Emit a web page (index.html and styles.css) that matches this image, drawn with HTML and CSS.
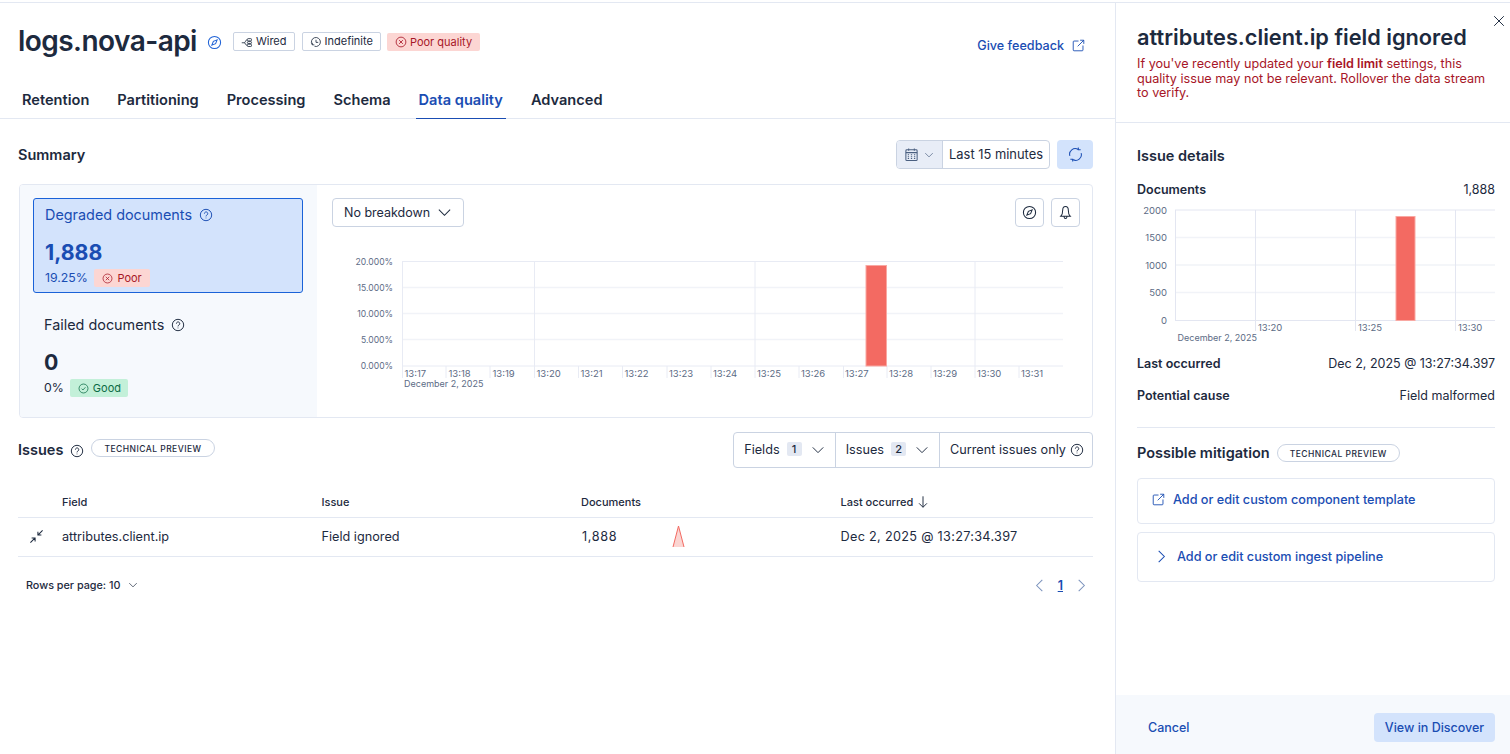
FILE: index.html
```html
<!DOCTYPE html>
<html lang="en">
<head>
<meta charset="utf-8">
<title>logs.nova-api</title>
<link rel="stylesheet" href="styles.css">
</head>
<body>
<svg class="defs" aria-hidden="true">
  <symbol id="i-help" viewBox="0 0 16 16"><circle cx="8" cy="8" r="6.5"/><path d="M6.2 6.4a1.900 1.900 0 1 1 2.900 1.600c-.7.4-1.100.8-1.100 1.600M8 11v.8"/></symbol>
  <symbol id="i-compass" viewBox="0 0 16 16"><circle cx="8" cy="8" r="6.500"/><path d="M10.800 5.200 9.200 9.200 5.200 10.800 6.800 6.800Z"/></symbol>
  <symbol id="i-x" viewBox="0 0 16 16"><circle cx="8" cy="8" r="6.500"/><path d="m5.500 5.500 5 5m0-5-5 5"/></symbol>
  <symbol id="i-check" viewBox="0 0 16 16"><circle cx="8" cy="8" r="6.500"/><path d="m5.200 8.200 2 2 3.600-4"/></symbol>
  <symbol id="i-down" viewBox="0 0 16 16"><path d="m2 5 6 6 6-6"/></symbol>
  <symbol id="i-left" viewBox="0 0 16 16"><path d="M11 2 5 8l6 6"/></symbol>
  <symbol id="i-right" viewBox="0 0 16 16"><path d="M5 2l6 6-6 6"/></symbol>
  <symbol id="i-pop" viewBox="0 0 16 16"><path d="M8 2.500H2.500a1 1 0 0 0-1 1v10a1 1 0 0 0 1 1h10a1 1 0 0 0 1-1V8M7 9l7.500-7.500M10 1.500h4.500V6"/></symbol>
  <symbol id="i-cal" viewBox="0 0 16 16"><rect x="2" y="3" width="12" height="11.500" rx="1"/><path d="M2 6h12M5 1.500V4M11 1.500V4M4 8.300h1.400M7.300 8.300h1.400M10.600 8.300H12M4 10.300h1.400M7.300 10.300h1.400M10.600 10.300H12M4 12.300h1.400M7.300 12.300h1.400M10.600 12.300H12"/></symbol>
  <symbol id="i-sync" viewBox="0 0 16 16"><path d="M2 9.500A6 6 0 0 1 10.800 2.600M14 6.500A6 6 0 0 1 5.200 13.400M11 .5v2.500H13.500M5 15.500V13H2.500"/></symbol>
  <symbol id="i-bell" viewBox="0 0 16 16"><path d="M8 1.500C5.800 1.500 5 3.400 5 5.500c0 3.500-.6 5.200-2 6.500h10c-1.400-1.300-2-3-2-6.500 0-2.100-.8-4-3-4ZM6.500 12.500c0 1 .6 1.800 1.500 1.800s1.500-.8 1.500-1.800"/></symbol>
  <symbol id="i-wired" viewBox="0 0 16 16"><path d="M1 9h3.500M4.500 9c1.500 0 1.500-4 3.500-4M4.500 9c1.500 0 1.500 3.500 3.500 3.500"/><rect x="8.500" y="3.500" width="5.500" height="3" rx="1"/><rect x="8.500" y="7.500" width="5.500" height="2.500" rx="1"/><rect x="8.500" y="11" width="5.500" height="3" rx="1"/></symbol>
  <symbol id="i-clock" viewBox="0 0 16 16"><path d="M3 11.500A6 6 0 1 1 6 13.700M3 9v2.800h2.800M8 5v3.500h3"/></symbol>
  <symbol id="i-min" viewBox="0 0 16 16"><path d="M14.500 1.500 9.500 6.500M9.500 2.800v3.700h3.700M1.500 14.500l5-5M2.800 9.500h3.700v3.700"/></symbol>
  <symbol id="i-close" viewBox="0 0 16 16"><path d="m2.500 2.500 11 11m0-11-11 11"/></symbol>
  <symbol id="i-arrow" viewBox="0 0 16 16"><path d="M8 1.500v12.500M3.500 9.500 8 14l4.500-4.500"/></symbol>
</svg>

<div class="strip"></div>
<div class="shell">
  <main class="main">
    <header class="head">
      <div class="head-row">
        <h1 class="title">logs.nova-api</h1>
        <svg class="ic ic-15 title-ic"><use href="#i-compass"/></svg>
        <span class="badge badge-out"><svg class="ic ic-12"><use href="#i-wired"/></svg>Wired</span>
        <span class="badge badge-out"><svg class="ic ic-12"><use href="#i-clock"/></svg>Indefinite</span>
        <span class="badge badge-poor"><svg class="ic ic-12"><use href="#i-x"/></svg>Poor quality</span>
        <a class="feedback">Give feedback<svg class="ic ic-13"><use href="#i-pop"/></svg></a>
      </div>
      <nav class="tabs">
        <span class="tab">Retention</span>
        <span class="tab">Partitioning</span>
        <span class="tab">Processing</span>
        <span class="tab">Schema</span>
        <span class="tab tab-on">Data quality</span>
        <span class="tab">Advanced</span>
      </nav>
    </header>

    <section class="body">
      <div class="sum-head">
        <h2 class="h-sm">Summary</h2>
        <div class="sum-tools">
          <div class="picker">
            <span class="picker-ic"><svg class="ic ic-15 slate"><use href="#i-cal"/></svg><svg class="ic ic-10 slate"><use href="#i-down"/></svg></span>
            <span class="picker-val">Last 15 minutes</span>
          </div>
          <button class="refresh"><svg class="ic ic-15 blue"><use href="#i-sync"/></svg></button>
        </div>
      </div>

      <div class="panel">
        <div class="stats">
          <div class="stat stat-on">
            <div class="stat-label">Degraded documents<svg class="ic ic-14"><use href="#i-help"/></svg></div>
            <div class="stat-num">1,888</div>
            <div class="stat-sub">19.25%<span class="pill pill-poor"><svg class="ic ic-11"><use href="#i-x"/></svg>Poor</span></div>
          </div>
          <div class="stat">
            <div class="stat-label">Failed documents<svg class="ic ic-14"><use href="#i-help"/></svg></div>
            <div class="stat-num">0</div>
            <div class="stat-sub">0%<span class="pill pill-good"><svg class="ic ic-11"><use href="#i-check"/></svg>Good</span></div>
          </div>
        </div>
        <div class="chart-pane">
          <div class="chart-tools">
            <button class="select">No breakdown<svg class="ic ic-15"><use href="#i-down"/></svg></button>
            <div class="icon-btns">
              <button class="icon-btn"><svg class="ic ic-15"><use href="#i-compass"/></svg></button>
              <button class="icon-btn"><svg class="ic ic-15"><use href="#i-bell"/></svg></button>
            </div>
          </div>
          <svg class="chart-main" viewBox="340 250 740 145">
            <g class="grid-soft">
              <path d="M402 287.500H1063M402 313.500H1063M402 339.500H1063"/>
            </g>
            <g class="grid">
              <path d="M402 261.500H1063M402 366H1063M402.500 261V378M534.500 261V378M755 261V378M975 261V378"/>
              <path d="M446 366V378M490 366V378M578.500 366V378M622.500 366V378M667 366V378M711 366V378M799 366V378M843.500 366V378M887 366V378M931 366V378M1019 366V378"/>
            </g>
            <rect class="bar" x="866" y="265.500" width="20.500" height="100.500"/>
            <g class="axis-y axis-tight">
              <text x="393" y="264.500">20.000%</text>
              <text x="393" y="290.500">15.000%</text>
              <text x="393" y="316.500">10.000%</text>
              <text x="393" y="342.500">5.000%</text>
              <text x="393" y="369">0.000%</text>
            </g>
            <g class="axis-x">
              <text x="404.500" y="377">13:17</text>
              <text x="448.500" y="377">13:18</text>
              <text x="492.500" y="377">13:19</text>
              <text x="536.500" y="377">13:20</text>
              <text x="580.500" y="377">13:21</text>
              <text x="624.500" y="377">13:22</text>
              <text x="669" y="377">13:23</text>
              <text x="713" y="377">13:24</text>
              <text x="757" y="377">13:25</text>
              <text x="801" y="377">13:26</text>
              <text x="845" y="377">13:27</text>
              <text x="889" y="377">13:28</text>
              <text x="933" y="377">13:29</text>
              <text x="977" y="377">13:30</text>
              <text x="1021" y="377">13:31</text>
              <text class="axis-date" x="404" y="386.500">December 2, 2025</text>
            </g>
          </svg>
        </div>
      </div>

      <div class="iss-head">
        <div class="iss-title">
          <h2 class="h-sm">Issues</h2>
          <svg class="ic ic-14 iss-help"><use href="#i-help"/></svg>
          <span class="tag">TECHNICAL PREVIEW</span>
        </div>
        <div class="filters">
          <span class="filter">Fields<span class="count">1</span><svg class="ic ic-14"><use href="#i-down"/></svg></span>
          <span class="filter">Issues<span class="count">2</span><svg class="ic ic-14"><use href="#i-down"/></svg></span>
          <span class="filter filter-last">Current issues only<svg class="ic ic-14"><use href="#i-help"/></svg></span>
        </div>
      </div>

      <div class="table">
        <div class="tr th">
          <span></span>
          <span>Field</span>
          <span>Issue</span>
          <span>Documents</span>
          <span class="sort">Last occurred<svg class="ic ic-14"><use href="#i-arrow"/></svg></span>
        </div>
        <div class="tr td">
          <span class="expand"><svg class="ic ic-15"><use href="#i-min"/></svg></span>
          <span>attributes.client.ip</span>
          <span>Field ignored</span>
          <span class="docs"><span class="docs-num">1,888</span><svg class="spark" viewBox="0 0 14 24"><path class="spark-fill" d="M1 23 6.500 2 12 23Z"/><path class="spark-line" d="M1 23 6.500 2 12 23"/></svg></span>
          <span class="mono-ish">Dec 2, 2025 @ 13:27:34.397</span>
        </div>
      </div>

      <div class="pager">
        <span class="rows">Rows per page: 10<svg class="ic ic-10"><use href="#i-down"/></svg></span>
        <span class="pages">
          <svg class="ic ic-15 faint"><use href="#i-left"/></svg>
          <span class="page-on">1</span>
          <svg class="ic ic-15 faint"><use href="#i-right"/></svg>
        </span>
      </div>
    </section>
  </main>

  <aside class="fly">
    <button class="close"><svg class="ic ic-14"><use href="#i-close"/></svg></button>
    <div class="fly-head">
      <h2 class="fly-title">attributes.client.ip field ignored</h2>
      <p class="fly-warn">If you've recently updated your <b>field limit</b> settings, this quality issue may not be relevant. Rollover the data stream to verify.</p>
    </div>
    <div class="fly-body">
      <h3 class="h-sm details-h">Issue details</h3>
      <div class="kv kv-docs"><b>Documents</b><span>1,888</span></div>
      <svg class="chart-fly" viewBox="1137 200 358 145">
        <g class="grid-soft"><path d="M1175 237.500H1495M1175 265H1495M1175 292.500H1495"/></g>
        <g class="grid thin">
          <path d="M1175 210H1495M1175 320.500H1495M1175.500 210V321M1255.500 210V331M1355.500 210V331M1455.500 210V331"/>
        </g>
        <rect class="bar" x="1396" y="216.500" width="19" height="104"/>
        <g class="axis-y">
          <text x="1167" y="213.500">2000</text>
          <text x="1167" y="241">1500</text>
          <text x="1167" y="268.500">1000</text>
          <text x="1167" y="296">500</text>
          <text x="1167" y="323.500">0</text>
        </g>
        <g class="axis-x">
          <text x="1258" y="331">13:20</text>
          <text x="1358" y="331">13:25</text>
          <text x="1458" y="331">13:30</text>
          <text class="axis-date" x="1177.500" y="340.500">December 2, 2025</text>
        </g>
      </svg>
      <div class="kv kv-last"><b>Last occurred</b><span>Dec 2, 2025 @ 13:27:34.397</span></div>
      <div class="kv kv-cause"><b>Potential cause</b><span>Field malformed</span></div>
      <div class="mit-head">
        <h3 class="h-sm">Possible mitigation</h3>
        <span class="tag">TECHNICAL PREVIEW</span>
      </div>
      <a class="mit-card"><svg class="ic ic-13"><use href="#i-pop"/></svg>Add or edit custom component template</a>
      <a class="mit-card mit-card-tall"><svg class="ic ic-15"><use href="#i-right"/></svg>Add or edit custom ingest pipeline</a>
    </div>
    <footer class="fly-foot">
      <span class="cancel">Cancel</span>
      <button class="discover">View in Discover</button>
    </footer>
  </aside>
</div>
</body>
</html>
```

FILE: styles.css
```css
* { box-sizing: border-box; }
html, body { margin: 0; height: 100%; }
body {
  width: 1510px;
  height: 754px;
  overflow: hidden;
  background: #fff;
  color: #1d2a3e;
  font-family: Inter, "Liberation Sans", sans-serif;
  font-size: 13px;
  display: flex;
  flex-direction: column;
}
button { font: inherit; color: inherit; background: none; border: 0; padding: 0; }
h1, h2, h3, p { margin: 0; }
.defs { display: none; }

.ic { fill: none; stroke: currentColor; stroke-width: 1.100; flex: none; display: block; }
.ic-10 { width: 10px; height: 10px; }
.ic-11 { width: 11px; height: 11px; }
.ic-12 { width: 12px; height: 12px; }
.ic-13 { width: 13px; height: 13px; }
.ic-14 { width: 14px; height: 14px; }
.ic-15 { width: 15px; height: 15px; }
.blue { color: #1a4db3; }
.slate { color: #4a5f80; }
.faint { color: #7c93bd; }

.strip { height: 3px; flex: none; border-bottom: 1px solid #e3e8f2; }
.shell { flex: 1; display: flex; min-height: 0; }

/* main column */
.main { width: 1115px; flex: none; }
.head { border-bottom: 1px solid #e3e8f2; height: 116px; padding: 20px 18px 0; }
.head-row { display: flex; align-items: center; height: 36px; }
.title { font-size: 28px; font-weight: 600; line-height: 36px; letter-spacing: -0.55px; }
.title-ic { margin: 2px 0 0 10px; color: #1f62d6; }
.badge {
  display: inline-flex; align-items: center; gap: 3px;
  height: 19px; padding: 0 7px; margin-left: 7px;
  border-radius: 2px; font-size: 11px; font-weight: 400; line-height: 1; margin-top: 1px;
}
.title-ic + .badge { margin-left: 11px; }
.badge-out { border: 1px solid #cad3e2; }
.badge.badge-poor { background: #fcd6d3; color: #a71627; height: 18px; margin: 2px 0 0 6px; padding: 0 8px; }
.feedback {
  margin-left: auto; margin-right: 12px; margin-top: 9px;
  display: inline-flex; align-items: center; gap: 8px;
  color: #1a4db3; font-size: 12.600px; font-weight: 500;
}
.tabs { display: flex; gap: 22px; margin-top: 20px; height: 40px; padding-left: 1px; }
.tab { padding: 0 3px; line-height: 43px; height: 40px; font-size: 14.600px; font-weight: 600; color: #1d2a3e; }
.tab-on { color: #1a4db3; border-bottom: 1px solid #1a4db3; }

.body { padding: 0 22px 0 18px; }
.sum-head { display: flex; justify-content: space-between; align-items: center; height: 29px; margin-top: 21px; }
.h-sm { font-size: 14.500px; font-weight: 600; line-height: 20px; }
.sum-tools { display: flex; gap: 7px; }
.picker { display: flex; height: 29px; border: 1px solid #cad3e2; border-radius: 4px; overflow: hidden; }
.picker-ic { display: flex; align-items: center; gap: 5px; width: 46px; padding-left: 7px; background: #e8edf7; border-right: 1px solid #cad3e2; }
.picker-val { padding: 0 6px; line-height: 27px; font-size: 12.900px; }
.refresh { width: 36px; height: 29px; background: #d3e3fc; border-radius: 4px; display: flex; align-items: center; justify-content: center; }

.panel { display: flex; height: 234px; margin-top: 15px; margin-left: 1px; border: 1px solid #e3e8f2; border-radius: 4px; overflow: hidden; }
.stats { width: 297px; flex: none; background: #f6f9fd; padding: 13px 14px 0 13px; }
.stat { height: 95px; padding: 7px 11px 0; border-radius: 3px; border: 1px solid transparent; }
.stat + .stat { margin-top: 15px; height: 96px; padding-left: 10px; }
.stat-on { background: #d3e3fc; border-color: #1a62d8; color: #1a4db3; }
.stat-label { display: flex; align-items: center; gap: 7px; font-size: 14.400px; line-height: 17px; }
.stat-num { font-size: 21.300px; font-weight: 700; line-height: 28px; margin-top: 15px; }
.stat-sub { display: flex; align-items: center; gap: 6.500px; font-size: 12.300px; line-height: 18px; margin-top: 3px; }
.pill { display: inline-flex; align-items: center; gap: 4px; height: 18px; padding: 0 8px; border-radius: 2px; font-size: 11px; font-weight: 400; }
.pill-poor { background: #fcd6d3; color: #a71627; }
.pill-good { background: #c3f0d9; color: #0b6b45; padding: 0 7.500px; }

.chart-pane { flex: 1; padding: 13px 14px 0 15px; }
.chart-tools { display: flex; justify-content: space-between; align-items: flex-start; height: 29px; }
.select { display: flex; align-items: center; gap: 7px; width: 132px; height: 29px; padding: 0 5px 0 11px; border: 1px solid #cad3e2; border-radius: 4px; background: #fff; font-size: 12.500px; }
.icon-btns { display: flex; gap: 7px; }
.icon-btn { width: 29px; height: 29px; border: 1px solid #cad3e2; border-radius: 4px; display: flex; align-items: center; justify-content: center; }
.chart-main { display: block; width: 740px; height: 145px; margin: 23px 0 0 8px; }

.grid path { fill: none; stroke: #e8ebf4; stroke-width: 1; }
.grid-soft path { fill: none; stroke: #f1f3f8; stroke-width: 1.500; }
.grid.thin path { stroke: #e3e6f1; }
.bar { fill: #f36a62; stroke: #f9a8a2; stroke-width: 1; }
.axis-y text, .axis-x text { font-size: 9.500px; fill: #5c6b85; font-family: Inter, "Liberation Sans", sans-serif; }
.axis-y text { text-anchor: end; }
.axis-y.axis-tight text { font-size: 8.600px; }
.axis-x .axis-date { font-size: 9px; }

.iss-head { display: flex; justify-content: space-between; align-items: center; height: 36px; margin-top: 14px; }
.iss-title { display: flex; align-items: center; height: 36px; }
.iss-help { margin: 1px 0 0 7px; }
.tag {
  display: inline-flex; align-items: center; height: 18px; padding: 1px 12px 0;
  border: 1px solid #cad3e2; border-radius: 9px;
  font-size: 8.500px; font-weight: 500; letter-spacing: .47px; white-space: nowrap;
}
.iss-title .tag { margin: -4px 0 0 7px; }
.filters { display: flex; height: 36px; border: 1px solid #cad3e2; border-radius: 4px; }
.filter { display: flex; align-items: center; gap: 7px; padding: 0 10px 2px; font-size: 12.700px; border-right: 1px solid #cad3e2; }
.filter .ic { margin-top: 2px; }
.filter-last { border-right: 0; gap: 4px; padding-right: 8px; }
.count { background: #e3e8f2; font-size: 11px; font-weight: 500; width: 15px; height: 14px; border-radius: 2px; text-align: center; line-height: 14px; margin-right: 2px; }

.table { margin-top: 14px; }
.tr { display: grid; grid-template-columns: 44px 259.500px 259.500px 259.500px 1fr; align-items: center; border-bottom: 1px solid #e3e8f2; }
.th { height: 36px; font-size: 11px; font-weight: 500; padding-top: 4px; }
.td { height: 39px; font-size: 12.700px; padding-bottom: 2px; }
.sort { display: inline-flex; align-items: center; gap: 3px; }
.expand { padding-left: 11px; }
.docs { display: flex; align-items: center; padding-left: 1px; }
.docs-num { width: 90px; letter-spacing: .6px; }
.spark { width: 14px; height: 24px; display: block; }
.spark-fill { fill: #fbd5d2; }
.spark-line { fill: none; stroke: #f36a62; stroke-width: 1; }
.mono-ish { letter-spacing: .3px; }

.pager { display: flex; justify-content: space-between; align-items: center; padding: 0 0 0 8px; margin-top: 20px; height: 16px; }
.rows { display: flex; align-items: center; gap: 8px; font-size: 10.800px; font-weight: 500; }
.pages { display: flex; align-items: center; gap: 11px; padding-right: 4px; }
.page-on { color: #1a4db3; font-size: 12.500px; font-weight: 600; text-decoration: underline; }

/* flyout */
.fly { position: relative; width: 395px; flex: none; border-left: 1px solid #e3e8f2; display: flex; flex-direction: column; }
.close { position: absolute; top: 11px; right: 4px; width: 14px; height: 14px; }
.fly-head { height: 120px; padding: 19px 15px 0 21px; border-bottom: 1px solid #e3e8f2; }
.fly-title { font-size: 21.750px; font-weight: 600; line-height: 30px; white-space: nowrap; }
.fly-warn { color: #a71627; font-size: 12.650px; line-height: 14.500px; margin-top: 5px; }
.fly-warn b { font-weight: 600; }
.fly-body { flex: 1; padding: 23px 15px 0 21px; }
.details-h { margin-bottom: 16px; }
.kv { display: flex; justify-content: space-between; font-size: 12.500px; line-height: 16px; }
.kv b { font-weight: 600; }
.chart-fly { display: block; width: 358px; height: 145px; margin-top: 2px; }
.kv-last { margin-top: 11px; }
.kv-cause { margin-top: 16px; padding-bottom: 23px; border-bottom: 1px solid #e3e8f2; }
.mit-head { display: flex; align-items: center; gap: 7px; margin-top: 15px; height: 20px; }
.mit-card {
  display: flex; align-items: center; gap: 8px; height: 46px; margin-top: 15px; padding: 0 0 3px 14px;
  border: 1px solid #e3e8f2; border-radius: 4px;
  color: #1a4db3; font-size: 12.650px; font-weight: 500;
}
.mit-card-tall { height: 50px; margin-top: 8px; padding: 0 0 2px 16px; }
.fly-foot { height: 59px; flex: none; background: #f6f9fd; display: flex; align-items: center; justify-content: space-between; padding: 6px 15px 0 21px; color: #1a4db3; font-size: 12.500px; font-weight: 500; }
.cancel { padding-left: 11px; }
.discover { width: 121px; height: 29px; background: #d3e3fc; border-radius: 4px; color: #1a4db3; font-weight: 500; }
```
